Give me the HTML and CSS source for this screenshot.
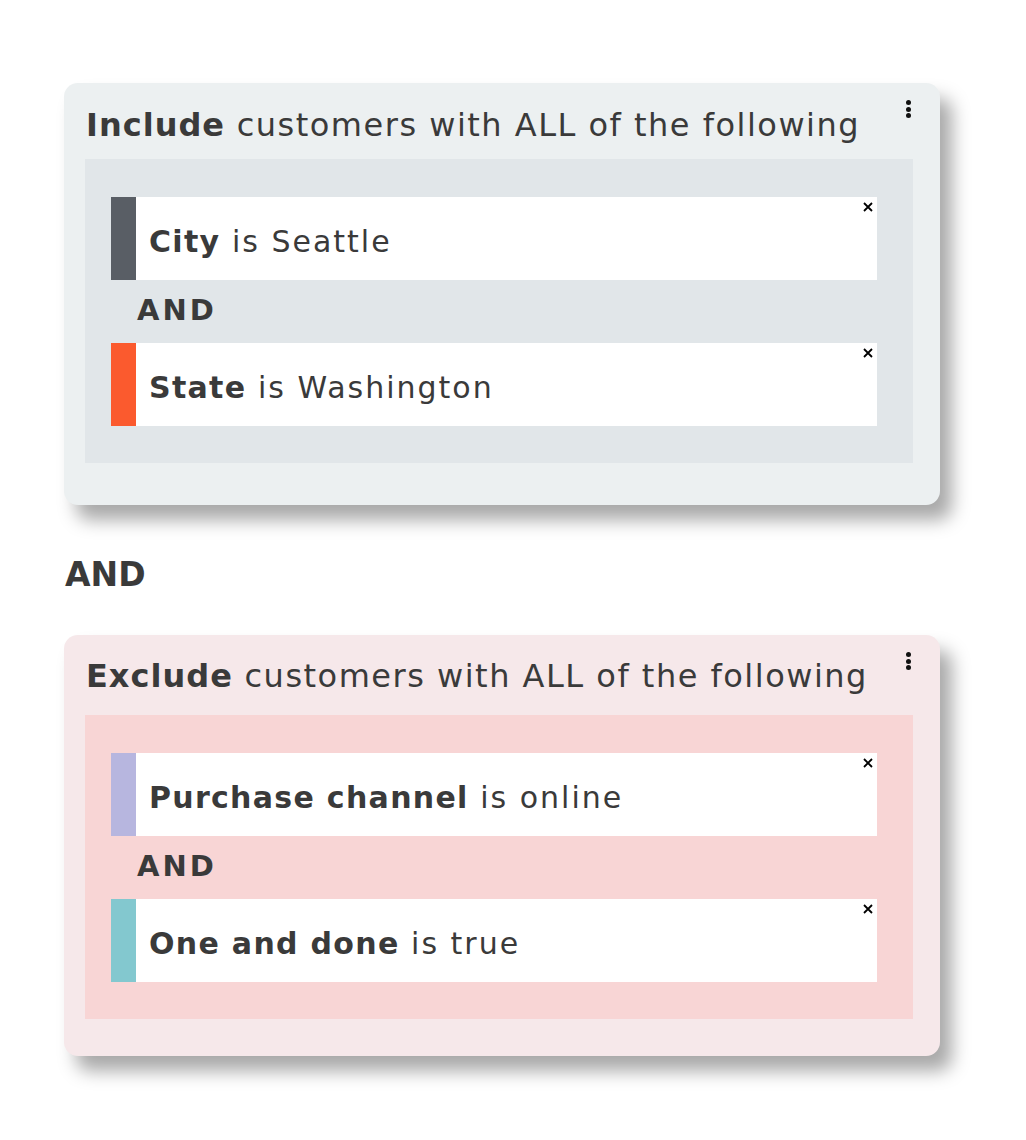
FILE: index.html
```html
<!DOCTYPE html>
<html>
<head>
<meta charset="utf-8">
<link rel="stylesheet" href="styles.css">
</head>
<body>
<div class="page">
  <section class="card card-include">
    <div class="kebab"><span></span><span></span><span></span></div>
    <h2 class="card-title"><b>Include</b> customers with ALL of the following</h2>
    <div class="panel">
      <div class="rule">
        <div class="rule-bar bar-gray"></div>
        <div class="rule-text"><b>City</b> is Seattle</div>
        <svg class="close" viewBox="0 0 10 10" width="10" height="10"><path d="M1 1L9 9M9 1L1 9" stroke="#000" stroke-width="1.8"/></svg>
      </div>
      <div class="inner-and">AND</div>
      <div class="rule">
        <div class="rule-bar bar-orange"></div>
        <div class="rule-text"><b>State</b> is Washington</div>
        <svg class="close" viewBox="0 0 10 10" width="10" height="10"><path d="M1 1L9 9M9 1L1 9" stroke="#000" stroke-width="1.8"/></svg>
      </div>
    </div>
  </section>

  <div class="outer-and">AND</div>

  <section class="card card-exclude">
    <div class="kebab"><span></span><span></span><span></span></div>
    <h2 class="card-title"><b>Exclude</b> customers with ALL of the following</h2>
    <div class="panel">
      <div class="rule">
        <div class="rule-bar bar-purple"></div>
        <div class="rule-text"><b>Purchase channel</b> is online</div>
        <svg class="close" viewBox="0 0 10 10" width="10" height="10"><path d="M1 1L9 9M9 1L1 9" stroke="#000" stroke-width="1.8"/></svg>
      </div>
      <div class="inner-and">AND</div>
      <div class="rule">
        <div class="rule-bar bar-teal"></div>
        <div class="rule-text"><b>One and done</b> is true</div>
        <svg class="close" viewBox="0 0 10 10" width="10" height="10"><path d="M1 1L9 9M9 1L1 9" stroke="#000" stroke-width="1.8"/></svg>
      </div>
    </div>
  </section>
</div>
</body>
</html>
```
FILE: styles.css
```css
* { box-sizing: border-box; }
html, body { margin: 0; padding: 0; background: #ffffff; }
body {
  font-family: "DejaVu Sans", "Noto Sans", sans-serif;
  color: #3a3a3a;
}
.page {
  padding: 83px 0 84px 64px;
  width: 1026px;
  min-height: 1140px;
}
.card {
  position: relative;
  width: 876px;
  border-radius: 14px;
  padding: 0 27px 42px 21px;
  box-shadow: 12px 15px 18px rgba(0, 0, 0, 0.34);
}
.card-include { background: #ecf0f1; }
.card-exclude { background: #f6e8ea; padding-bottom: 37px; }
.card-title {
  margin: 0;
  padding: 22px 0 0 1px;
  height: 76px;
  font-size: 32px;
  line-height: 40px;
  font-weight: 400;
  white-space: nowrap;
  letter-spacing: 1.5px;
}
.card-exclude .card-title { height: 80px; padding-top: 21px; }
.card-title b { font-weight: 700; letter-spacing: 1px; }
.kebab {
  position: absolute;
  top: 17px;
  right: 29px;
  display: flex;
  flex-direction: column;
  gap: 1.5px;
}
.kebab span {
  width: 5px;
  height: 5px;
  border-radius: 50%;
  background: #111;
}
.panel {
  padding: 38px 36px 37px 26px;
}
.card-include .panel { background: #e1e6e9; }
.card-exclude .panel { background: #f8d5d5; }
.rule {
  position: relative;
  display: flex;
  align-items: center;
  height: 83px;
  background: #ffffff;
}
.rule-bar {
  align-self: stretch;
  width: 25px;
  flex: 0 0 25px;
}
.bar-gray { background: #595e65; }
.bar-orange { background: #fb5a2e; }
.bar-purple { background: #b7b6df; }
.bar-teal { background: #83c8cf; }
.rule-text {
  padding: 5px 0 0 13px;
  font-size: 30px;
  font-weight: 400;
  white-space: nowrap;
  letter-spacing: 2px;
}
.rule-text b { font-weight: 700; letter-spacing: 1.3px; }
.close {
  position: absolute;
  top: 5px;
  right: 4px;
}
.inner-and {
  height: 63px;
  padding: 0 0 0 26px;
  font-size: 29px;
  font-weight: 700;
  line-height: 60px;
  letter-spacing: 3px;
}
.outer-and {
  height: 130px;
  padding: 50px 0 0 1px;
  font-size: 33px;
  font-weight: 700;
  line-height: 40px;
}
```
